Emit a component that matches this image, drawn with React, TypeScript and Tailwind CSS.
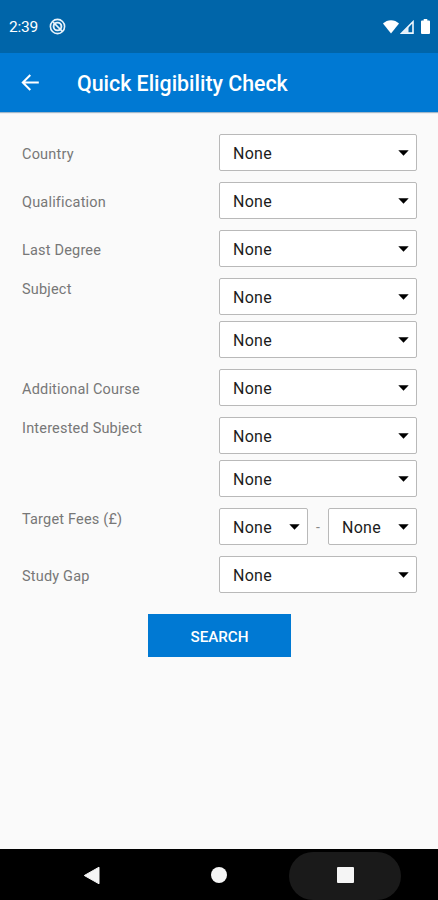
import React from 'react';

interface SelectProps {
  value?: string;
  className?: string;
}

interface FieldProps {
  label: string;
  top?: boolean;
  children: React.ReactNode;
}

const Select: React.FC<SelectProps> = ({ value = 'None', className = 'w-full' }) => (
  <button
    type="button"
    className={`flex h-[37px] items-center justify-between rounded-[2px] border border-[#b9b9b9] bg-white pl-[13px] pr-[7px] text-[16px] tracking-[0.25px] text-[#1c1c1c] ${className}`}
  >
    <span className="pt-0.5">{value}</span>
    <svg width="11" height="6" viewBox="0 0 11 6">
      <path d="M0.3 0.3h10.4L5.5 5.8z" fill="#000" />
    </svg>
  </button>
);

const Field: React.FC<FieldProps> = ({ label, top, children }) => (
  <div className="flex">
    <div
      className={`w-[197px] shrink-0 text-[14.5px] leading-[21px] tracking-[0.19px] text-[#777] ${
        top ? 'pt-px' : 'pt-[10px]'
      }`}
    >
      {label}
    </div>
    <div className="flex flex-1 flex-col gap-1.5">{children}</div>
  </div>
);

const StatusBar = () => (
  <div className="flex h-[53px] items-center justify-between bg-[#0065a9] pl-[9px] pr-[8px] text-white">
    <div className="flex items-center gap-[11px]">
      <span className="pt-0.5 text-[15.5px] leading-none tracking-[-0.2px]">2:39</span>
      <svg width="17" height="17" viewBox="0 0 17 17" fill="none" stroke="#e9f3fb">
        <circle cx="8.5" cy="8.5" r="7.1" strokeWidth="1.6" />
        <circle cx="8.5" cy="8.5" r="3.9" strokeWidth="1.9" />
        <path d="M4 4l9.3 9.3" strokeWidth="1.7" />
      </svg>
    </div>
    <div className="flex items-center">
      <svg width="16" height="14" viewBox="0 0 16 14">
        <path d="M0 3.6C4.2-0.9 11.8-0.9 16 3.6L8 13.6z" fill="#fff" />
      </svg>
      <svg width="14" height="14" viewBox="0 0 14 14" className="ml-px">
        <path d="M1.800 13.100L13 1.800V13.100z" fill="none" stroke="#f0f7fd" strokeWidth="1.6" />
        <path d="M8.500 6.500v6.700H1.800z" fill="#e3effa" />
      </svg>
      <svg width="9" height="15" viewBox="0 0 9 15" className="ml-[7px]">
        <path d="M2.700 0h3.600v1.400H8q1 0 1 1V14q0 1-1 1H1q-1 0-1-1V2.400q0-1 1-1h1.700z" fill="#fff" />
      </svg>
    </div>
  </div>
);

const Header = () => (
  <header className="flex h-[59px] items-center bg-[#0079d3] pl-[21px] text-white shadow-[0_1px_1px_rgba(0,60,110,0.35)]">
    <svg width="18" height="17" viewBox="0 0 18 17" fill="none" stroke="#fff" strokeWidth="2">
      <path d="M17.800 8.500H1.800M9.300 1L1.800 8.500L9.300 16" />
    </svg>
    <h1 className="ml-[38px] mt-0.5 text-[21.35px] font-medium leading-6">Quick Eligibility Check</h1>
  </header>
);

const NavBar = () => (
  <nav className="flex h-[51px] items-end bg-black">
    <div className="flex h-12 flex-1 items-center justify-end pb-0.5 pr-[46px]">
      <svg width="17" height="19" viewBox="0 0 17 19">
        <path d="M16 1.200v16.600L1.300 9.500z" fill="#f5f5f5" stroke="#f5f5f5" strokeLinejoin="round" />
      </svg>
    </div>
    <div className="flex h-12 w-[143px] items-center justify-center pb-0.5">
      <div className="ml-[3px] size-4 rounded-full bg-[#f5f5f5]" />
    </div>
    <div className="mr-[37px] flex h-12 w-[112px] items-center justify-center rounded-full bg-[#1a1a1a] pb-0.5">
      <div className="h-4 w-[17px] rounded-[1px] bg-[#f5f5f5]" />
    </div>
  </nav>
);

export default function App() {
  return (
    <div className="flex h-[900px] w-[438px] flex-col overflow-hidden bg-[#fafafa] font-[Roboto,sans-serif]">
      <StatusBar />
      <Header />

      <main className="flex flex-1 flex-col gap-[11px] pl-[22px] pr-[21px] pt-[22px]">
        <Field label="Country">
          <Select />
        </Field>
        <Field label="Qualification">
          <Select />
        </Field>
        <Field label="Last Degree">
          <Select />
        </Field>
        <Field label="Subject" top>
          <Select />
          <Select />
        </Field>
        <Field label="Additional Course">
          <Select />
        </Field>
        <Field label="Interested Subject" top>
          <Select />
          <Select />
        </Field>
        <Field label="Target Fees (£)" top>
          <div className="flex items-center justify-between">
            <Select className="w-[89px]" />
            <span className="text-sm text-[#888]">-</span>
            <Select className="w-[89px]" />
          </div>
        </Field>
        <Field label="Study Gap">
          <Select />
        </Field>

        <button
          type="button"
          className="ml-[126px] mt-[10px] h-[43px] w-[143px] bg-[#0079d3] pt-[3px] text-[15.2px] font-medium text-white"
        >
          SEARCH
        </button>
      </main>

      <NavBar />
    </div>
  );
}
